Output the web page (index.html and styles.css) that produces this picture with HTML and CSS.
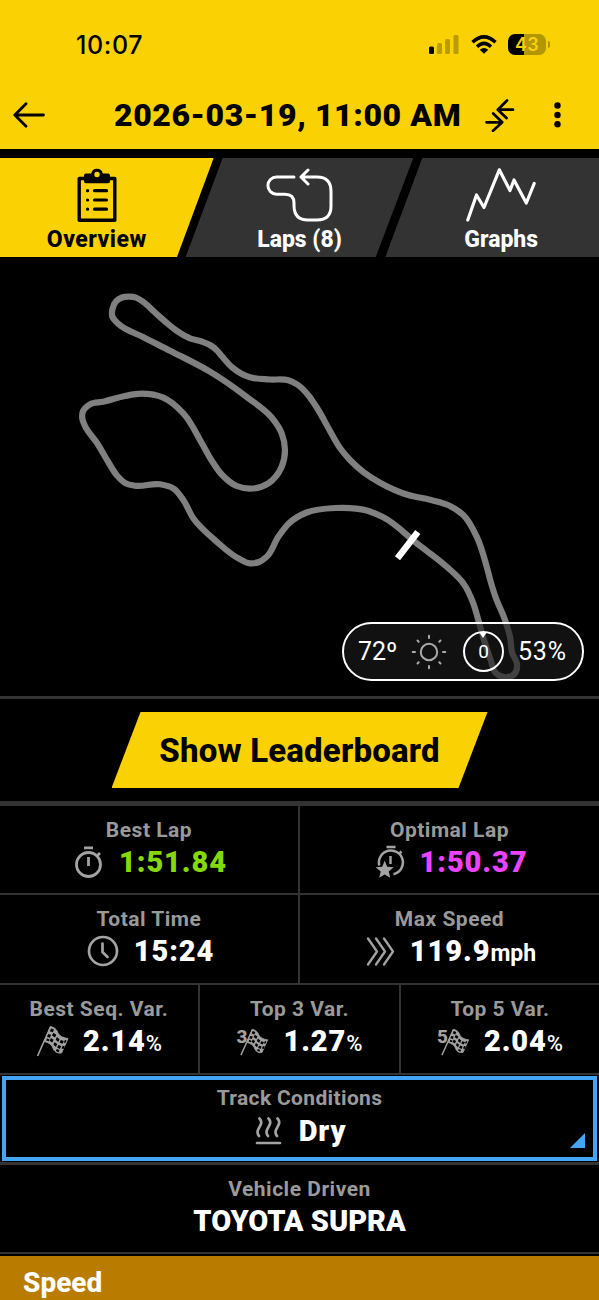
FILE: index.html
```html
<!DOCTYPE html>
<html lang="en">
<head>
<meta charset="utf-8">
<meta name="viewport" content="width=device-width">
<title>Session Overview</title>
<link rel="stylesheet" href="styles.css">
</head>
<body>
<svg class="defs" width="0" height="0" aria-hidden="true">
  <symbol id="flag" viewBox="0 0 34 32">
    <path d="M1.500 31 L14.500 2" stroke="#a3a3a3" stroke-width="1.600" fill="none"/>
    <path d="M14.500 1.500 C18 2.500 20.500 4 21.500 7 C22.500 10.500 27 13 32 13.500 L25.500 28 C21 28.500 18 26.500 17 23 C16 19.500 12.500 17.500 8.500 16.500 Z" fill="#a3a3a3" stroke="#a3a3a3" stroke-width="1" stroke-linejoin="round"/>
    <g fill="#000">
      <path d="M15 3.500l3 1-1.200 2.800-3-1zM12.300 9l2.800.8-1.200 2.900-2.900-.9zM17.300 7.800l3 2-1.300 2.800-3-2zM14.900 13l2.700 1.800-1.200 2.800-2.800-1.700zM20.900 12l2.700 2.200-1.300 2.800-2.600-2.200zM18.600 17.200l2.600 1.900-1.300 2.900-2.500-2.200zM24.800 15l3 .9-1.300 2.900-2.900-1.200zM22.400 20l2.800 1-1.300 2.900-2.800-1.300zM20.700 24.100l2.800 1-1 2.100-2.600-1.200zM26.800 20.700l2 .5-1.200 2.800-2.100-.6zM29 14.900l1.500.4-1.200 2.700-1.600-.5zM11 13.300l2.500 1.200-.7 1.700-2.500-.8z"/>
    </g>
  </symbol>
</svg>
<main class="screen">
  <header class="header">
    <div class="status">
      <time class="clock">10:07</time>
      <div class="status-icons">
        <svg width="30" height="19" viewBox="0 0 30 19"><rect x="0" y="11.500" width="5" height="7.500" rx="1.500"/><g opacity=".25"><rect x="8" y="8" width="5" height="11" rx="1.500"/><rect x="16" y="4" width="5" height="15" rx="1.500"/><rect x="24.500" y="0" width="5" height="19" rx="1.500"/></g></svg>
        <svg class="wifi" width="26" height="20" viewBox="0 0 26 20" fill="none" stroke="#000" stroke-width="3.500"><path d="M1.500 7.200 Q13-3.300 24.500 7.200M6 11.700 Q13 5.200 20 11.700"/><path d="M13 18.800 L8.700 14.800 Q13 11.200 17.300 14.800Z" fill="#000" stroke="none"/></svg>
        <div class="battery"><span class="battery-level">43</span><i class="battery-cap"></i></div>
      </div>
    </div>
    <div class="titlebar">
      <svg class="back" width="32" height="26" viewBox="0 0 32 26" fill="none" stroke="#000" stroke-width="2.800" stroke-linecap="round" stroke-linejoin="round"><path d="M30.500 13H2M13 1.800 1.800 13 13 24.200"/></svg>
      <h1 class="title">2026-03-19, 11:00 AM</h1>
      <svg class="compare" width="30" height="33" viewBox="0 0 30 33" fill="none" stroke="#000" stroke-width="2.700" stroke-linecap="round" stroke-linejoin="round"><path d="M28 10.700H13.300M22 1.500 12.800 10.700 21.500 19M1.500 23.300H17M8.200 14.500 17.200 23.300 8 31.800"/></svg>
      <svg class="more" width="7" height="26" viewBox="0 0 7 26"><circle cx="3.500" cy="3.500" r="3.200"/><circle cx="3.500" cy="13" r="3.200"/><circle cx="3.500" cy="22.300" r="3.200"/></svg>
    </div>
  </header>

  <nav class="tabs">
    <a class="tab tab-overview">
      <svg width="40" height="54" viewBox="0 0 40 54"><path d="M2.200 10.500H37.800V52.200H2.200Z" fill="none" stroke="#000" stroke-width="3.400" stroke-linejoin="round"/><path d="M9 5.500H14.200A5.900 5.900 0 0 1 25.800 5.500H31Q33 5.500 33 7.500V13Q33 15.300 31 15.300H9Q7 15.300 7 13V7.500Q7 5.500 9 5.500Z"/><circle cx="20" cy="6.500" r="2.700" fill="#fad103"/><g stroke="#000" stroke-width="3.200" stroke-linecap="round"><path d="M17.500 22.700H29.500M17.500 32H29.500M17.500 41.200H29.500"/><path d="M10.500 22.700h.1M10.500 32h.1M10.500 41.200h.1"/></g></svg>
      <span>Overview</span>
    </a>
    <a class="tab tab-laps">
      <svg width="68" height="54" viewBox="0 0 68 54" fill="none" stroke="#fff" stroke-width="3" stroke-linecap="round" stroke-linejoin="round"><path d="M28 9H10.500A8.500 8.500 0 0 0 10.500 26.200H19Q28 26.200 28 35V37.500Q28 52 42 52H51Q65 52 65 38V23.500Q65 9 51 9H35M42 2 35 9 42 16"/></svg>
      <span>Laps (8)</span>
    </a>
    <a class="tab tab-graphs">
      <svg width="70" height="54" viewBox="0 0 70 54" fill="none" stroke="#fff" stroke-width="3.200" stroke-linecap="round" stroke-linejoin="round"><path d="M1.800 52 10.500 27 18 39.500 33.300 1.800 44 22.500 48 12 60.300 35 68.200 15.500"/></svg>
      <span>Graphs</span>
    </a>
  </nav>

  <section class="map">
    <svg class="track" viewBox="0 257 599 439">
      <path id="circuit" fill="none" stroke="#808080" stroke-width="6.200" stroke-linejoin="round"/>
      <path d="M397.500 558.300 417.800 532" stroke="#fff" stroke-width="6.500"/>
    </svg>
    <div class="weather">
      <span class="temp">72º</span>
      <svg class="sun" width="36" height="36" viewBox="-18 -18 36 36" fill="none" stroke="#aaa" stroke-width="2"><circle r="8.200"/><path stroke-linecap="round" d="M0-16.300V-14M0 14V16.300M-16.300 0H-14M14 0H16.300M-11.500-11.500-10.300-10.300M10.300 10.300 11.500 11.500M11.500-11.500 10.300-10.300M-10.300 10.300-11.500 11.500"/></svg>
      <span class="wind">0</span>
      <span class="humidity">53%</span>
    </div>
  </section>

  <section class="leaderboard"><button class="cta">Show Leaderboard</button></section>

  <section class="stats two">
    <div class="cell"><h2>Best Lap</h2><p><svg class="ico stopwatch" width="30" height="32" viewBox="0 0 30 32" fill="none" stroke="#a3a3a3" stroke-width="2.800"><circle cx="14.500" cy="18.500" r="12"/><path d="M10 1.800H19M14.500 11V20M23.500 9.500 26 7"/></svg><b class="best">1:51.84</b></p></div>
    <div class="cell"><h2>Optimal Lap</h2><p><svg class="ico optimal" width="30" height="34" viewBox="0 0 30 34" fill="none" stroke="#a3a3a3" stroke-width="2.500"><path d="M4.300 20.500A12 12 0 1 1 18.500 29.200M11.500 2H20.500M15.500 11V19M24 9 26.500 6.500"/><path d="M9.700 15.800 12.200 21.700 18.700 22.200 13.700 26.500 15.200 32.800 9.700 29.500 4.200 32.800 5.700 26.500.7 22.200 7.200 21.700Z" fill="#a3a3a3" stroke="none"/></svg><b class="ideal">1:50.37</b></p></div>
    <div class="cell"><h2>Total Time</h2><p><svg class="ico clockico" width="32" height="32" viewBox="0 0 32 32" fill="none" stroke="#a3a3a3" stroke-width="2.700"><circle cx="16" cy="16" r="14"/><path stroke-linecap="round" stroke-linejoin="round" d="M15.500 8.500V17L20.500 22"/></svg><b class="total">15:24</b></p></div>
    <div class="cell"><h2>Max Speed</h2><p><svg class="ico chevrons" width="29" height="29" viewBox="0 0 29 29" fill="none" stroke="#a3a3a3" stroke-width="2.300" stroke-linecap="round" stroke-linejoin="round"><path d="M2 1.500 11 14.500 2 27.500M10 1.500 19 14.500 10 27.500M18 1.500 27 14.500 18 27.500"/></svg><b class="speed">119.9</b><small class="mph">mph</small></p></div>
  </section>
  <section class="stats three">
    <div class="cell"><h2>Best Seq. Var.</h2><p><svg class="ico" width="34" height="32"><use href="#flag"/></svg><b>2.14</b><small>%</small></p></div>
    <div class="cell"><h2>Top 3 Var.</h2><p><span class="ico numbered"><svg width="34" height="32"><use href="#flag" x="3" y="3" width="31" height="28"/></svg><i>3</i></span><b>1.27</b><small>%</small></p></div>
    <div class="cell"><h2>Top 5 Var.</h2><p><span class="ico numbered"><svg width="34" height="32"><use href="#flag" x="3" y="3" width="31" height="28"/></svg><i>5</i></span><b>2.04</b><small>%</small></p></div>
  </section>
  <section class="conditions-row"><div class="conditions">
    <h2>Track Conditions</h2>
    <p><svg class="ico heat" width="27" height="28" viewBox="0 0 27 28" fill="none" stroke="#a3a3a3" stroke-width="2.700" stroke-linecap="round"><path d="M4.500 1.500C10.500 8-1.500 12 4 19M13.500 1.500C19.500 8 7.500 12 13 19M22.500 1.500C28.500 8 16.500 12 22 19M2 26H25"/></svg><b>Dry</b></p>
  </div></section>
  <section class="vehicle"><h2>Vehicle Driven</h2><p><b>TOYOTA SUPRA</b></p></section>
  <section class="speed-head">Speed</section>
</main>
<script src="track.js"></script>
</body>
</html>
```
FILE: styles.css
```css
* { box-sizing: border-box; }
body { margin: 0; background: #000; color: #fff; font-family: Roboto, "Noto Sans", sans-serif; }
h1, h2, p { margin: 0; }
.defs { position: absolute; }
.screen { width: 599px; height: 1300px; overflow: hidden; display: flex; flex-direction: column; }
.screen > * { flex-shrink: 0; }

.header { height: 149px; background: #fad103; color: #000; }
.status { height: 82px; padding: 30px 49px 0 76px; display: flex; justify-content: space-between; align-items: flex-start; }
.clock { font: 500 25px/30px Inter, sans-serif; letter-spacing: .6px; }
.status-icons { display: flex; align-items: center; height: 29px; }
.wifi { margin-left: 12px; }
.battery { margin: 0 4px 0 11px; width: 38px; height: 21px; border-radius: 7px; background: linear-gradient(90deg, #000 43%, #b29602 43%); position: relative; display: flex; align-items: center; justify-content: center; }
.battery-level { color: #fad103; font: 600 18px/21px Inter, sans-serif; letter-spacing: .3px; }
.battery-cap { position: absolute; right: -4px; top: 7px; width: 2.500px; height: 7px; border-radius: 0 3px 3px 0; background: #b29602; }
.titlebar { height: 66px; display: flex; align-items: center; padding-left: 13px; }
.title { margin-left: 69px; width: 348px; font-size: 32px; line-height: 40px; font-weight: 900; white-space: nowrap; letter-spacing: .6px; }
.compare { margin-left: 23px; }
.more { margin-left: 39px; }

.tabs { margin-top: 9px; height: 99px; display: flex; }
.tab { height: 99px; padding-top: 10px; display: flex; flex-direction: column; align-items: center; background: #333; font-size: 23px; line-height: 28px; font-weight: 800; }
.tab span { margin-top: 4px; white-space: nowrap; }
.tab-overview { width: 214px; padding-right: 20px; background: #fad103; color: #000; clip-path: polygon(0 0, 100% 0, 177px 100%, 0 100%); }
.tab-overview span { letter-spacing: .5px; }
.tab-laps { width: 228px; margin-left: -28px; clip-path: polygon(37px 0, 100% 0, 190px 100%, 0 100%); }
.tab-graphs { width: 214px; margin-left: -28px; padding-left: 18px; clip-path: polygon(37px 0, 100% 0, 100% 100%, 0 100%); }

.map { height: 442px; border-bottom: 3px solid #333; position: relative; }
.track { display: block; width: 599px; height: 439px; }
.weather { position: absolute; left: 342px; top: 365px; width: 242px; height: 59px; border: 2px solid #fff; border-radius: 30px; background: rgba(27, 27, 27, .63); display: flex; align-items: center; padding-left: 14px; font-size: 25px; white-space: nowrap; }
.temp { width: 40px; }
.sun { margin-left: 13px; }
.wind { position: relative; margin-left: 16px; width: 41px; height: 41px; border: 2px solid #fff; border-radius: 50%; display: flex; align-items: center; justify-content: center; font-size: 19px; }
.wind::before { content: ""; position: absolute; top: -1px; left: 14px; border: solid transparent; border-width: 6px 4.500px 0; border-top-color: #fff; }
.humidity { margin-left: 14px; letter-spacing: .8px; }

.leaderboard { height: 102px; display: flex; justify-content: center; padding-top: 13px; }
.cta { width: 376px; height: 76px; border: 0; padding: 2px 0 0; background: #fad103; color: #000; clip-path: polygon(29px 0, 100% 0, 347px 100%, 0 100%); font: 800 33px/74px Roboto, sans-serif; letter-spacing: .2px; }

.stats { display: grid; gap: 2px; background: #333; border-bottom: 2px solid #333; }
.two { grid-template-columns: 298px 299px; grid-template-rows: 87px 88px; border-top: 5px solid #333; }
.three { grid-template-columns: 198px 199px 198px; grid-template-rows: 88px; }
.cell { background: #000; padding-top: 12px; }
h2 { font-size: 21px; line-height: 24px; font-weight: 700; color: #9a9a9a; text-align: center; letter-spacing: .5px; }
p { height: 40px; display: flex; justify-content: center; align-items: center; white-space: nowrap; }
b { font-size: 29px; line-height: 40px; font-weight: 900; letter-spacing: .9px; }
small { font-size: 22px; font-weight: 500; padding-top: 4px; }
.mph { font-weight: 700; font-size: 23px; }
.ico { margin-right: 15px; }
.best { color: #86d80b; }
.ideal { color: #ee42ff; }
.two p { padding-left: 3px; }
.numbered { position: relative; width: 34px; height: 32px; }
.numbered i { position: absolute; left: 0; top: 2px; font: 800 19px/20px Roboto, sans-serif; color: #a3a3a3; }
.three .ico { margin-right: 13px; }

.conditions-row { height: 90px; padding: 1px 2px 1px; border-bottom: 3px solid #333; }
.conditions { position: relative; height: 85px; border: 4px solid #42a5f5; padding-top: 6px; }
.conditions p { height: 42px; padding-left: 2px; }
.conditions h2 { letter-spacing: .35px; }
.conditions .ico { margin-right: 17px; }
.conditions::after { content: ""; position: absolute; right: 8px; bottom: 9px; width: 15px; height: 15px; background: #42a5f5; clip-path: polygon(100% 0, 100% 100%, 0 100%); }
.vehicle { height: 89px; padding-top: 12px; border-bottom: 2px solid #333; }
.vehicle b { letter-spacing: 0; }
.speed-head { margin-top: 2px; height: 44px; padding: 8px 23px; background: #b97c00; font-size: 28px; line-height: 38px; font-weight: 800; }
```
FILE: track.js
```js
// Centre line of the circuit, clockwise from the top-left hairpin.
const points = [
  [129.3,296.7],[136,297.6],[143.3,302],[155,312.5],[166.7,322.8],[178,331.6],[190,338.3],[201,341.3],[210,345],[216.5,350],
  [221.7,356],[233.3,368.3],[241,373.5],[250,377.3],
  [270,379.5],[288.3,380.3],[298,385],[306.7,393.3],[318.3,410],[330,431],[340,448],[350,460],[364,472.5],[380,482.7],[408.3,495],
  [430,499.8],[448,505],[463.3,515],[476.7,536.7],[486.7,566.7],[490.5,581],[495.5,597],[505,620],[510,636.7],[512.3,653.3],[517,664],
  [515,673.3],[506,677.3],[496,673.3],[490.7,660],[485,643.3],[478.3,620],[473.3,603.3],[463.3,583.3],
  [446.7,566.7],[416.7,543.3],[383.3,517.3],[366.7,510.5],[335,508],[306.7,512.5],[290,522.3],[278.3,536.7],
  [266.7,556.7],[259,562],[250,563.3],[238.3,558.3],[216.7,541.7],[193.3,518.3],[183.3,500],[173.3,488.3],[160,484.3],
  [135,485.7],[126,483.5],[117,475.5],[108.3,462],[97,443],[85,426],[82.4,419],[82.7,412],[90,404.3],[103.3,401.7],[125,396],
  [141.7,393.7],[163.3,397.7],[183.3,413.3],[201.7,443],[212,461],[221.7,474.5],[236.7,486],[250,488.7],[268.3,483.3],
  [281.7,466.7],[285,450],[281.7,433.3],[271.7,417.5],[246.7,397],[210,371.7],[170,350.7],[143,337],[118.3,323.8],
  [112.3,316.5],[112.5,309],[116,301.3],[122,297.5]
];

// Smooth closed curve; control handles follow each segment's own length.
const n = points.length;
const at = i => points[(i + n) % n];
const dist = (a, b) => Math.hypot(a[0] - b[0], a[1] - b[1]);
const tangent = i => {
  const p = at(i - 1), q = at(i), r = at(i + 1);
  const d1 = dist(p, q), d2 = dist(q, r);
  return [0, 1].map(k => ((q[k] - p[k]) / d1 * d2 + (r[k] - q[k]) / d2 * d1) / (d1 + d2));
};
let d = `M${points[0]}`;
for (let i = 0; i < n; i++) {
  const a = at(i), b = at(i + 1), h = dist(a, b) / 3;
  const ta = tangent(i), tb = tangent(i + 1);
  d += `C${a[0] + ta[0] * h},${a[1] + ta[1] * h} ${b[0] - tb[0] * h},${b[1] - tb[1] * h} ${b[0]},${b[1]}`;
}
document.getElementById("circuit").setAttribute("d", d + "Z");
```
